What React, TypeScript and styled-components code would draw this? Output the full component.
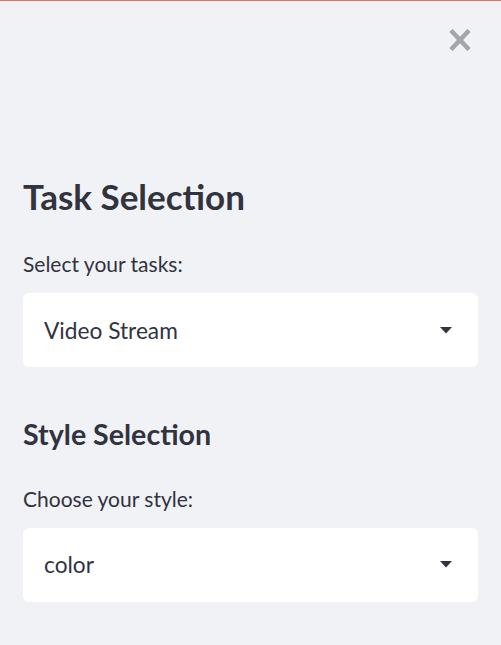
import { createGlobalStyle, styled } from 'styled-components';

const GlobalStyle = createGlobalStyle`
  html, body {
    margin: 0;
    padding: 0;
    background: #f0f2f6;
  }
  body {
    font-family: Lato, "Noto Sans", sans-serif;
    color: #31333f;
  }
`;

const Sidebar = styled.div`
  width: 501px;
  height: 645px;
  box-sizing: border-box;
  border-top: 1px solid #e2735f;
  background: #f0f2f6;
  padding: 0 23px;
  display: flex;
  flex-direction: column;
  overflow: hidden;
`;

const TopBar = styled.div`
  display: flex;
  justify-content: flex-end;
  padding-top: 28px;
  padding-right: 7px;
  height: 22px;
`;

const CloseButton = styled.button`
  border: none;
  background: none;
  padding: 0;
  width: 22px;
  height: 22px;
  color: #a4a5ad;
  cursor: pointer;
  display: flex;
`;

const Heading = styled.h2<{ $size: number }>`
  margin: 0;
  font-size: ${(p) => p.$size}px;
  font-weight: 700;
  line-height: 1.2;
  color: #31333f;
`;

const Label = styled.label`
  display: block;
  margin-top: 33px;
  font-size: 21px;
  line-height: 1.3;
  color: #31333f;
`;

const Select = styled.div`
  margin-top: 16px;
  height: 74px;
  box-sizing: border-box;
  background: #ffffff;
  border-radius: 6px;
  display: flex;
  align-items: center;
  justify-content: space-between;
  padding: 0 26px 0 21px;
  font-size: 22.7px;
  color: #31333f;
`;

const Section = styled.section<{ $top: number }>`
  margin-top: ${(p) => p.$top}px;
  display: flex;
  flex-direction: column;
`;

const Caret = () => (
  <svg width="12" height="7" viewBox="0 0 12 7">
    <path d="M0 0h12L6 6.5z" fill="#31333f" />
  </svg>
);

const SelectBox = ({ value }: { value: string }) => (
  <Select>
    <span>{value}</span>
    <Caret />
  </Select>
);

export default function App() {
  return (
    <>
      <GlobalStyle />
      <Sidebar>
        <TopBar>
          <CloseButton aria-label="Close sidebar">
            <svg width="22" height="22" viewBox="0 0 22 22">
              <path d="M2 1.5L20 20.5M20 1.5L2 20.5" stroke="currentColor" strokeWidth="4.5" />
            </svg>
          </CloseButton>
        </TopBar>
        <Section $top={124}>
          <Heading $size={35}>Task Selection</Heading>
          <Label>Select your tasks:</Label>
          <SelectBox value="Video Stream" />
        </Section>
        <Section $top={50}>
          <Heading $size={28.6}>Style Selection</Heading>
          <Label>Choose your style:</Label>
          <SelectBox value="color" />
        </Section>
      </Sidebar>
    </>
  );
}
